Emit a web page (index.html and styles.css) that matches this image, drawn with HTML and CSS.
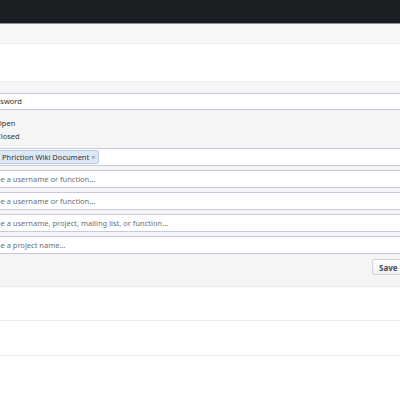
FILE: index.html
```html
<!DOCTYPE html>
<html lang="en">
<head>
    <meta charset="UTF-8">
    <title>Edit Document</title>
    <link rel="stylesheet" href="styles.css">
</head>
<body>
    <div class="main-menu"></div>
    <div class="crumbs"></div>
    <div class="page-header"></div>
    <div class="form-box">
        <div class="form">
            <div class="field"><div class="input">Password</div></div>
            <div class="field radios">
                <label class="radio"><span class="dot"></span>Open</label>
                <label class="radio"><span class="dot"></span>Closed</label>
            </div>
            <div class="field"><div class="input tokenizer"><span class="token">Phriction Wiki Document <span class="x">&times;</span></span></div></div>
            <div class="field"><div class="input placeholder">Type a username or function...</div></div>
            <div class="field"><div class="input placeholder">Type a username or function...</div></div>
            <div class="field"><div class="input placeholder">Type a username, project, mailing list, or function...</div></div>
            <div class="field"><div class="input placeholder">Type a project name...</div></div>
            <div class="actions"><button>Save Changes</button></div>
        </div>
    </div>
    <div class="box"></div>
    <div class="box last"></div>
</body>
</html>
```

FILE: styles.css
```css
body {
    margin: 0;
    overflow: hidden;
    background: #fff;
    font-family: "Noto Sans", "Open Sans", sans-serif;
    font-size: 7.5px;
    color: #333;
}
.main-menu {
    height: 23px;
    background: #1b1f23;
    border-bottom: 1px solid #8d9099;
}
.crumbs {
    height: 19px;
    background: #f7f7f9;
    border-bottom: 1px solid #ececee;
}
.page-header {
    height: 37px;
    background: #fff;
    border-bottom: 1px solid #e3edf5;
}
.form-box {
    background: #f5f5f5;
    border-bottom: 1px solid #e3ebf2;
    overflow: hidden;
}
.form {
    margin-left: -16px;
    width: 460px;
    padding: 11px 0 11px;
}
.field + .field {
    margin-top: 4px;
}
.field.radios,
.field.radios + .field {
    margin-top: 0;
}
.input {
    box-sizing: border-box;
    height: 18px;
    line-height: 16px;
    padding: 0 3px;
    background: #fff;
    border: 1px solid #c5cadd;
    white-space: nowrap;
}
.field:first-child .input {
    height: 17px;
    line-height: 15px;
}
.placeholder {
    color: #6b6f78;
}
.radios {
    padding: 6px 0;
}
.radio {
    display: flex;
    align-items: center;
    height: 13px;
    margin-left: -2px;
}
.dot {
    width: 8px;
    height: 8px;
    border: 1px solid #999;
    border-radius: 50%;
    background: #fff;
    margin-right: 4px;
}
.tokenizer {
    padding: 1px 1px;
    line-height: normal;
}
.token {
    display: inline-block;
    box-sizing: border-box;
    height: 14px;
    line-height: 12px;
    margin-left: 11px;
    padding: 0 3px 0 4px;
    background: #dde8f7;
    border: 1px solid #bccbe8;
    border-radius: 2px;
    color: #333;
}
.token .x {
    color: #777;
}
.actions {
    display: flex;
    margin-top: 5px;
    padding-left: 388px;
}
.actions button {
    height: 16px;
    padding: 0 6px;
    font-family: inherit;
    font-size: 8px;
    font-weight: bold;
    color: #464c5c;
    white-space: nowrap;
    background: linear-gradient(#fff, #f1f1f1);
    border: 1px solid #d2d4d8;
    border-radius: 2px;
}
.box {
    height: 33px;
    border-bottom: 1px solid #e6eef4;
}
.box.last {
    height: 34px;
    border-bottom-color: #ececec;
}
```
